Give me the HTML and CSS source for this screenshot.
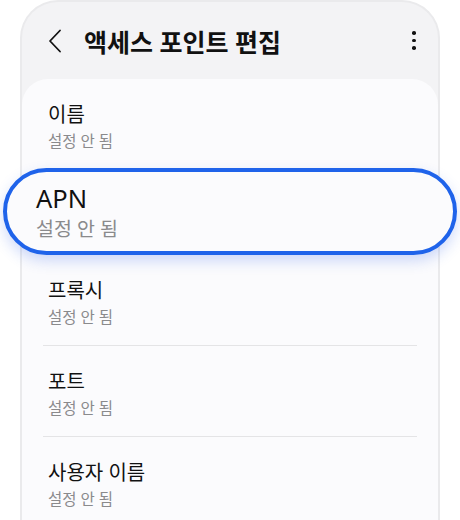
FILE: index.html
```html
<!DOCTYPE html>
<html lang="ko">
<head>
  <meta charset="UTF-8">
  <title>액세스 포인트 편집</title>
  <link rel="stylesheet" href="styles.css">
</head>
<body>

  <div class="phone">
    <div class="app-bar">
      <button class="icon-btn back" aria-label="뒤로">
        <svg width="14" height="24" viewBox="0 0 14 24">
          <path d="M12 1.5 L2 12 L12 22.5" fill="none" stroke="#111" stroke-width="1.8" stroke-linecap="round" stroke-linejoin="round"/>
        </svg>
      </button>
      <h1 class="title">액세스 포인트 편집</h1>
      <button class="icon-btn more" aria-label="더보기">
        <span class="dot"></span>
        <span class="dot"></span>
        <span class="dot"></span>
      </button>
    </div>

    <div class="card">
      <div class="item">
        <div class="item-title">이름</div>
        <div class="item-sub">설정 안 됨</div>
      </div>

      <!-- highlighted row, zoomed out past the card -->
      <div class="item item-focus">
        <div class="item-title">APN</div>
        <div class="item-sub">설정 안 됨</div>
      </div>

      <div class="item">
        <div class="item-title">프록시</div>
        <div class="item-sub">설정 안 됨</div>
      </div>
      <div class="item">
        <div class="item-title">포트</div>
        <div class="item-sub">설정 안 됨</div>
      </div>
      <div class="item">
        <div class="item-title">사용자 이름</div>
        <div class="item-sub">설정 안 됨</div>
      </div>
    </div>
  </div>

</body>
</html>
```

FILE: styles.css
```css
body {
  margin: 0;
  padding: 0 20px;
  background-color: #ffffff;
  font-family: "Noto Sans", "Noto Sans CJK KR", sans-serif;
  color: #111111;
  height: 520px;
  overflow: hidden;
}

.phone {
  width: 420px;
  min-height: 560px;
  box-sizing: border-box;
  background-color: #f3f3f5;
  border: 2px solid #eaeaec;
  border-bottom: none;
  border-radius: 38px 38px 0 0;
}

.app-bar {
  height: 77px;
  display: flex;
  align-items: center;
  padding: 0 22px 0 26px;
}

.icon-btn {
  background: none;
  border: none;
  padding: 0;
  cursor: pointer;
}

.back {
  width: 14px;
  height: 24px;
}

.back svg {
  display: block;
}

.title {
  flex: 1;
  margin: 0 0 0 22px;
  font-size: 25px;
  font-weight: 700;
}

.more {
  display: flex;
  flex-direction: column;
  gap: 4px;
}

.dot {
  width: 3.6px;
  height: 3.6px;
  border-radius: 50%;
  background-color: #111111;
}

.card {
  background-color: #fbfbfd;
  border-radius: 26px 26px 0 0;
  padding: 0 21px 40px;
}

.item {
  padding: 23px 5px 18px 5px;
  border-top: 1px solid #e4e4e6;
  display: flex;
  flex-direction: column;
  gap: 4px;
}

.item:first-child {
  border-top: none;
}

.item-title {
  font-size: 20px;
  line-height: 25px;
}

.item-sub {
  font-size: 15.5px;
  line-height: 20px;
  color: #8a8a8c;
}

.item-focus {
  height: 87px;
  box-sizing: border-box;
  margin: -1px -40px 0;
  padding: 0 0 0 29px;
  justify-content: center;
  gap: 3px;
  background-color: #fbfbfd;
  border: 4px solid #1f63ea;
  border-radius: 44px;
  box-shadow: 0 6px 14px rgba(40, 90, 230, 0.22);
  position: relative;
}

.item-focus .item-title {
  font-size: 25.5px;
  line-height: 30px;
}

.item-focus .item-sub {
  font-size: 19.5px;
  line-height: 25px;
}

.item-focus + .item {
  border-top: none;
}
```
